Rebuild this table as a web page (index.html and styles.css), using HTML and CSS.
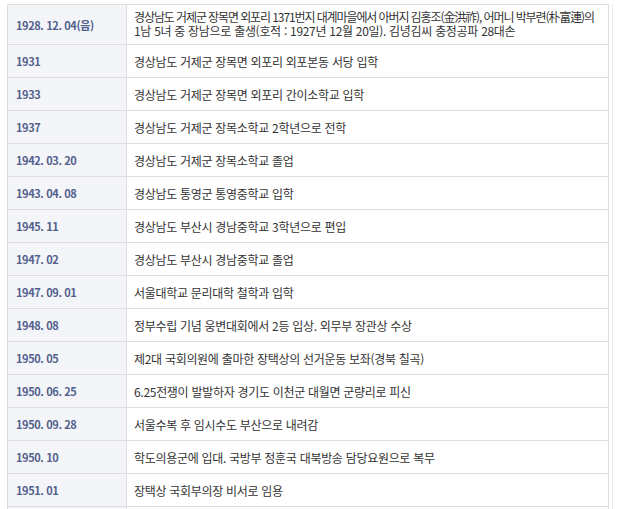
FILE: index.html
```html
<!DOCTYPE html>
<html lang="ko">
<head>
<meta charset="utf-8">
<link rel="stylesheet" href="styles.css">
</head>
<body>
<div class="frame">
  <div class="timeline">
    <div class="row first"><div class="date">1928. 12. 04(음)</div><div class="desc"><span class="line tight">경상남도 거제군 장목면 외포리 1371번지 대계마을에서 아버지 김홍조(金洪祚), 어머니 박부련(朴富連)의</span><span class="line">1남 5녀 중 장남으로 출생(호적 : 1927년 12월 20일). 김녕김씨 충정공파 28대손</span></div></div>
    <div class="row"><div class="date">1931</div><div class="desc">경상남도 거제군 장목면 외포리 외포본동 서당 입학</div></div>
    <div class="row"><div class="date">1933</div><div class="desc">경상남도 거제군 장목면 외포리 간이소학교 입학</div></div>
    <div class="row"><div class="date">1937</div><div class="desc">경상남도 거제군 장목소학교 2학년으로 전학</div></div>
    <div class="row"><div class="date">1942. 03. 20</div><div class="desc">경상남도 거제군 장목소학교 졸업</div></div>
    <div class="row"><div class="date">1943. 04. 08</div><div class="desc">경상남도 통영군 통영중학교 입학</div></div>
    <div class="row"><div class="date">1945. 11</div><div class="desc">경상남도 부산시 경남중학교 3학년으로 편입</div></div>
    <div class="row"><div class="date">1947. 02</div><div class="desc">경상남도 부산시 경남중학교 졸업</div></div>
    <div class="row"><div class="date">1947. 09. 01</div><div class="desc">서울대학교 문리대학 철학과 입학</div></div>
    <div class="row"><div class="date">1948. 08</div><div class="desc">정부수립 기념 웅변대회에서 2등 입상. 외무부 장관상 수상</div></div>
    <div class="row"><div class="date">1950. 05</div><div class="desc">제2대 국회의원에 출마한 장택상의 선거운동 보좌(경북 칠곡)</div></div>
    <div class="row"><div class="date">1950. 06. 25</div><div class="desc">6.25전쟁이 발발하자 경기도 이천군 대월면 군량리로 피신</div></div>
    <div class="row"><div class="date">1950. 09. 28</div><div class="desc">서울수복 후 임시수도 부산으로 내려감</div></div>
    <div class="row"><div class="date">1950. 10</div><div class="desc">학도의용군에 입대. 국방부 정훈국 대북방송 담당요원으로 복무</div></div>
    <div class="row"><div class="date">1951. 01</div><div class="desc">장택상 국회부의장 비서로 임용</div></div>
    <div class="row"><div class="date"></div><div class="desc"></div></div>
  </div>
</div>
</body>
</html>
```

FILE: styles.css
```css
html, body {
  margin: 0;
  padding: 0;
  background: #ffffff;
  overflow: hidden;
}
body {
  font-family: "Noto Sans CJK KR", "Noto Sans", sans-serif;
  font-size: 12px;
  color: #333333;
}
.frame {
  margin: 4px 0 0 7px;
  width: 605px;
  border-right: 1px solid #eeeeee;
}
.timeline {
  width: 600px;
  border: 1px solid #dddddd;
  border-bottom: none;
}
.row {
  display: grid;
  grid-template-columns: 119px 1fr;
  min-height: 32px;
  border-bottom: 1px solid #dddddd;
}
.date {
  background: #f4f5f9;
  border-right: 1px solid #dddddd;
  color: #52618c;
  font-size: 11px;
  font-weight: bold;
  padding-left: 8px;
  display: flex;
  align-items: center;
  letter-spacing: -0.4px;
}
.desc {
  padding: 0 0 0 7px;
  display: flex;
  align-items: center;
  line-height: 13px;
  letter-spacing: -0.3px;
  white-space: nowrap;
}
.first {
  min-height: 39px;
}
.first .desc {
  flex-direction: column;
  align-items: flex-start;
  justify-content: center;
  line-height: 14px;
  padding-bottom: 2px;
}
.line {
  display: block;
}
.tight {
  letter-spacing: -1.1px;
}
```
